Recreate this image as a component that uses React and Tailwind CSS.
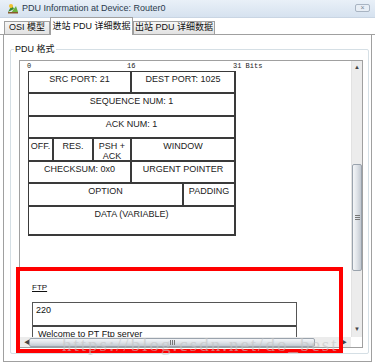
import React from 'react';

const ui = { fontFamily: '"Liberation Sans", "Noto Sans CJK SC", sans-serif' };
const mono = { fontFamily: '"Liberation Mono", monospace' };

function Cell({ className = '', children }) {
  return (
    <div className={`flex justify-center border-r-2 border-[#3a3a3a] pt-[2px] text-center leading-[10px] ${className}`}>
      {children}
    </div>
  );
}

function Row({ h, children }) {
  return <div className={`flex border-b-2 border-[#3a3a3a] ${h}`}>{children}</div>;
}

function TcpTable() {
  return (
    <div className="ml-[8px] w-[208px] border-l border-t border-[#3a3a3a] text-[9px] text-[#222]">
      <Row h="h-[22px]">
        <Cell className="w-[103px]">SRC PORT: 21</Cell>
        <Cell className="flex-1">DEST PORT: 1025</Cell>
      </Row>
      <Row h="h-[23px]">
        <Cell className="flex-1">SEQUENCE NUM: 1</Cell>
      </Row>
      <Row h="h-[22px]">
        <Cell className="flex-1">ACK NUM: 1</Cell>
      </Row>
      <Row h="h-[23px]">
        <Cell className="w-[25px]">OFF.</Cell>
        <Cell className="w-[40px]">RES.</Cell>
        <Cell className="w-[38px]">
          PSH +
          <br />
          ACK
        </Cell>
        <Cell className="flex-1">WINDOW</Cell>
      </Row>
      <Row h="h-[22px]">
        <Cell className="w-[103px]">CHECKSUM: 0x0</Cell>
        <Cell className="flex-1">URGENT POINTER</Cell>
      </Row>
      <Row h="h-[23px]">
        <Cell className="w-[155px]">OPTION</Cell>
        <Cell className="flex-1">PADDING</Cell>
      </Row>
      <Row h="h-[29px]">
        <Cell className="flex-1">DATA (VARIABLE)</Cell>
      </Row>
    </div>
  );
}

function VScroll() {
  return (
    <div className="flex w-[11px] flex-col items-center border-l border-[#e2e2e2] bg-[#ececec]">
      <div className="mt-[2px] h-[9px] text-[6px] leading-[9px] text-[#444]">▲</div>
      <div className="h-[92px]" />
      <div className="flex h-[107px] w-[10px] items-center justify-center rounded-[2px] border border-[#9aa3ad] bg-gradient-to-r from-[#f4f6f8] via-[#dfe3e8] to-[#c3c9d1]">
        <div className="flex flex-col gap-[1px]">
          <div className="h-px w-[5px] bg-[#777]" />
          <div className="h-px w-[5px] bg-[#777]" />
          <div className="h-px w-[5px] bg-[#777]" />
        </div>
      </div>
      <div className="flex-1" />
      <div className="mb-[3px] h-[9px] text-[6px] leading-[9px] text-[#444]">▼</div>
    </div>
  );
}

function HScroll() {
  return (
    <div className="flex h-[10px]">
      <div className="flex flex-1 items-center bg-[#ececec]">
        <div className="ml-[4px] w-[5px] text-[6px] leading-[10px] text-[#444]">◀</div>
        <div className="flex h-[9px] w-[286px] items-center justify-center rounded-[2px] border border-[#9aa3ad] bg-gradient-to-b from-[#f4f6f8] via-[#dfe3e8] to-[#c3c9d1]">
          <div className="flex gap-[1px]">
            <div className="h-[5px] w-px bg-[#777]" />
            <div className="h-[5px] w-px bg-[#777]" />
            <div className="h-[5px] w-px bg-[#777]" />
          </div>
        </div>
        <div className="flex-1" />
        <div className="mr-[4px] text-[6px] leading-[10px] text-[#444]">▶</div>
      </div>
      <div className="w-[11px] bg-white" />
    </div>
  );
}

function FtpBox() {
  return (
    <div className="ml-[12px] text-[9px] text-[#111]">
      <div className="h-[12px] text-[8px] leading-[12px] underline">FTP</div>
      <div className="mt-[8px] w-[265px] border border-[#555]">
        <div className="h-[24px] border-b-2 border-[#444] pl-[3px] pt-[1px] leading-[12px]">220</div>
        <div className="pl-[5px] pt-[1px] leading-[12px]">Welcome to PT Ftp server</div>
      </div>
    </div>
  );
}

export default function App() {
  return (
    <div className="relative h-[364px] w-[375px] overflow-hidden bg-white" style={ui}>
      <div className="flex h-[18px] items-center border-b border-[#c9d5e3] bg-gradient-to-b from-[#e9f0f8] to-[#d6e2ef] pl-[7px] pr-[5px]">
        <svg width="12" height="11" viewBox="0 0 12 11">
          <path d="M1 9 L5 2 L7 6 Z" fill="#3a8a2e" />
          <path d="M4 10 L9 3 L11 9 Z" fill="#6cb33f" />
          <circle cx="4" cy="3" r="2" fill="#f2c230" />
          <rect x="1" y="9" width="10" height="1.5" fill="#8a5a2b" />
        </svg>
        <span className="ml-[3px] text-[9px] text-[#2b3a4d]">PDU Information at Device: Router0</span>
        <div className="flex-1" />
        <div className="mt-[-2px] flex h-[8px] w-[15px] items-center justify-center rounded-[2px] border border-[#a8b4c2] bg-[#e8eef5] text-[7px] leading-none text-[#7a8696]">
          ×
        </div>
      </div>

      <div className="relative flex h-[17px] items-end border-b border-[#a0a0a0] pl-[4px] text-[9px] text-[#111]">
        <div className="mb-[-1px] flex h-[14px] w-[46px] items-center justify-center border border-[#a0a0a0] bg-gradient-to-b from-[#f6f6f6] to-[#e2e2e2]">
          OSI 模型
        </div>
        <div className="z-10 mb-[-1px] flex h-[18px] w-[83px] items-center justify-center border border-b-0 border-[#a0a0a0] bg-white">
          进站 PDU 详细数据
        </div>
        <div className="mb-[-1px] flex h-[14px] w-[82px] items-center justify-center border border-[#a0a0a0] bg-gradient-to-b from-[#f6f6f6] to-[#e2e2e2]">
          出站 PDU 详细数据
        </div>
      </div>

      <div className="mx-[3px] h-[327px] border-x border-b border-[#a0a0a0] bg-white pt-[14px]">
        <div className="relative ml-[6px] h-[305px] w-[359px] rounded-[2px] border border-[#d5dfe5]">
          <span className="absolute left-[3px] top-[-7px] bg-white px-[1px] text-[9px] leading-[12px] text-[#111]">
            PDU 格式
          </span>
          <div className="ml-[8px] mt-[10px] flex h-[288px] w-[344px] flex-col border border-[#a0a0a0]">
            <div className="flex min-h-0 flex-1">
              <div className="flex-1 overflow-hidden">
                <div className="relative h-[10px] text-[7px] leading-[10px] text-[#222]" style={mono}>
                  <span className="absolute left-[7px]">0</span>
                  <span className="absolute left-[107px]">16</span>
                  <span className="absolute left-[213px]">31 Bits</span>
                </div>
                <TcpTable />
                <div className="h-[46px]" />
                <FtpBox />
              </div>
              <VScroll />
            </div>
            <HScroll />
          </div>
        </div>
      </div>

      <div className="pointer-events-none absolute left-[16px] top-[267px] h-[86px] w-[327px] border-[4px] border-[#ff0000]" />
      <div
        className="pointer-events-none absolute left-[62px] top-[331px] text-[19px] tracking-[2px] text-[#c4c4c4] opacity-60"
        style={{ fontFamily: '"Liberation Serif", serif' }}
      >
        https://blog.csdn.net/do_best
      </div>
    </div>
  );
}
